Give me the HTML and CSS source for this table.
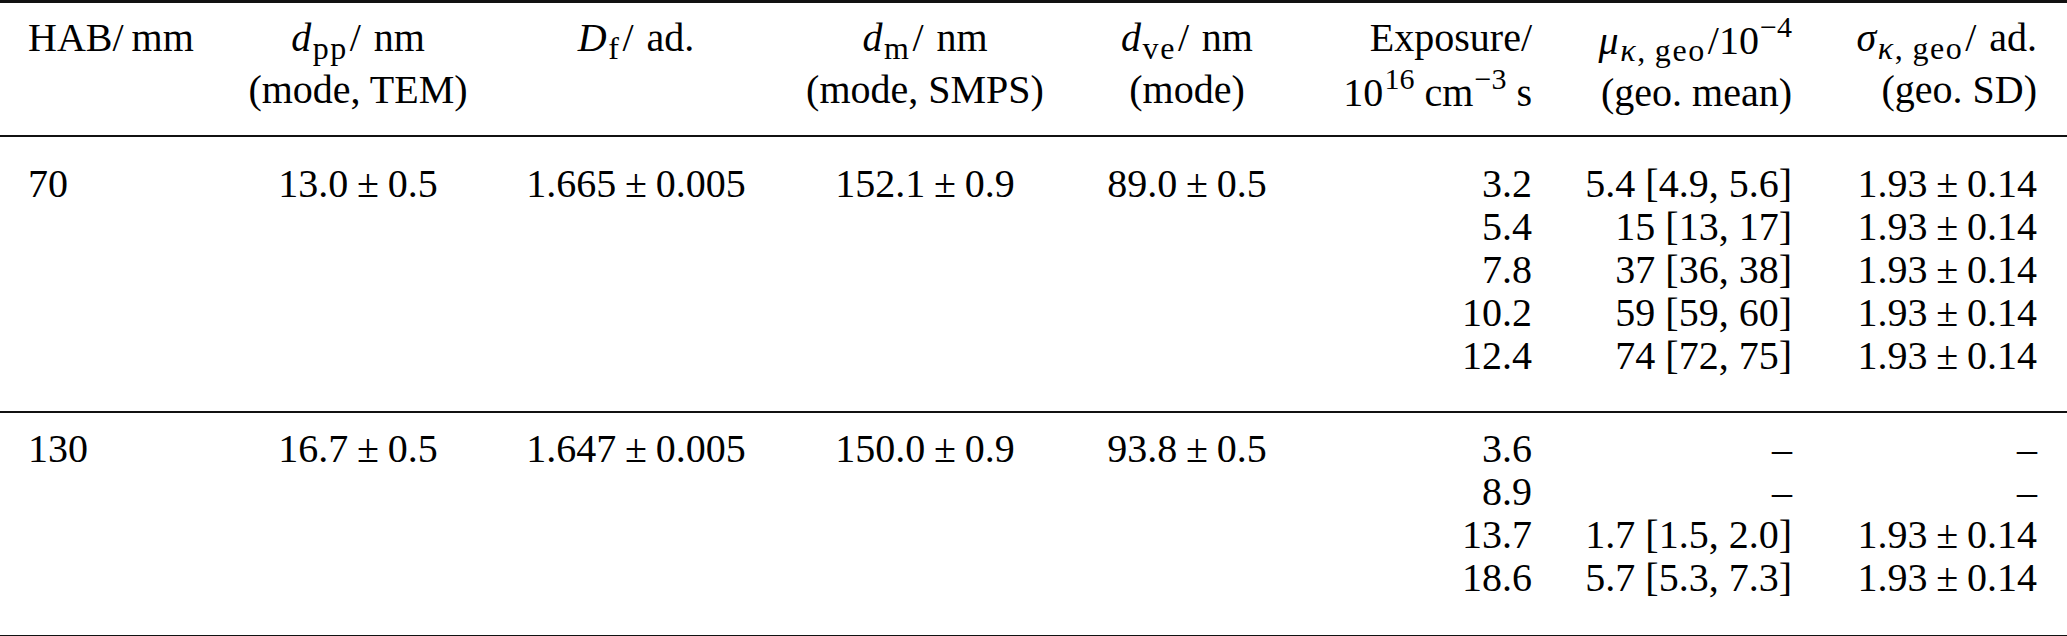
FILE: index.html
```html
<!DOCTYPE html>
<html>
<head>
    <link rel="stylesheet" href="styles.css">
</head>
<body>
    <table class="results">
        <colgroup>
            <col class="w1">
            <col class="w2">
            <col class="w3">
            <col class="w4">
            <col class="w5">
            <col class="w6">
            <col class="w7">
            <col class="w8">
        </colgroup>
        <thead>
            <tr>
                <th class="c1">HAB/&thinsp;mm</th>
                <th class="mid"><i>d</i><span class="sub">pp</span><span class="slash">/</span>nm<br>(mode, TEM)</th>
                <th class="mid"><i>D</i><span class="sub">f</span><span class="slash">/</span>ad.</th>
                <th class="mid"><i>d</i><span class="sub">m</span><span class="slash">/</span>nm<br>(mode, SMPS)</th>
                <th class="mid"><i>d</i><span class="sub">ve</span><span class="slash">/</span>nm<br>(mode)</th>
                <th class="c6">Exposure/<br>10<span class="sup">16</span> cm<span class="sup">−3</span> s</th>
                <th class="c7"><i>μ</i><span class="sub"><i>κ</i>,&thinsp;geo</span>/10<span class="sup">−4</span><br>(geo. mean)</th>
                <th class="c8"><i>σ</i><span class="sub"><i>κ</i>,&thinsp;geo</span><span class="slash">/</span>ad.<br>(geo. SD)</th>
            </tr>
        </thead>
        <tbody class="group">
            <tr class="first">
                <td class="c1">70</td>
                <td class="mid">13.0<span class="pm">±</span>0.5</td>
                <td class="mid">1.665<span class="pm">±</span>0.005</td>
                <td class="mid">152.1<span class="pm">±</span>0.9</td>
                <td class="mid">89.0<span class="pm">±</span>0.5</td>
                <td class="c6">3.2</td>
                <td class="c7">5.4 [4.9, 5.6]</td>
                <td class="c8">1.93<span class="pm">±</span>0.14</td>
            </tr>
            <tr>
                <td></td><td></td><td></td><td></td><td></td>
                <td class="c6">5.4</td>
                <td class="c7">15 [13, 17]</td>
                <td class="c8">1.93<span class="pm">±</span>0.14</td>
            </tr>
            <tr>
                <td></td><td></td><td></td><td></td><td></td>
                <td class="c6">7.8</td>
                <td class="c7">37 [36, 38]</td>
                <td class="c8">1.93<span class="pm">±</span>0.14</td>
            </tr>
            <tr>
                <td></td><td></td><td></td><td></td><td></td>
                <td class="c6">10.2</td>
                <td class="c7">59 [59, 60]</td>
                <td class="c8">1.93<span class="pm">±</span>0.14</td>
            </tr>
            <tr class="last">
                <td></td><td></td><td></td><td></td><td></td>
                <td class="c6">12.4</td>
                <td class="c7">74 [72, 75]</td>
                <td class="c8">1.93<span class="pm">±</span>0.14</td>
            </tr>
        </tbody>
        <tbody class="group end">
            <tr class="first">
                <td class="c1">130</td>
                <td class="mid">16.7<span class="pm">±</span>0.5</td>
                <td class="mid">1.647<span class="pm">±</span>0.005</td>
                <td class="mid">150.0<span class="pm">±</span>0.9</td>
                <td class="mid">93.8<span class="pm">±</span>0.5</td>
                <td class="c6">3.6</td>
                <td class="c7">–</td>
                <td class="c8">–</td>
            </tr>
            <tr>
                <td></td><td></td><td></td><td></td><td></td>
                <td class="c6">8.9</td>
                <td class="c7">–</td>
                <td class="c8">–</td>
            </tr>
            <tr>
                <td></td><td></td><td></td><td></td><td></td>
                <td class="c6">13.7</td>
                <td class="c7">1.7 [1.5, 2.0]</td>
                <td class="c8">1.93<span class="pm">±</span>0.14</td>
            </tr>
            <tr class="last">
                <td></td><td></td><td></td><td></td><td></td>
                <td class="c6">18.6</td>
                <td class="c7">5.7 [5.3, 7.3]</td>
                <td class="c8">1.93<span class="pm">±</span>0.14</td>
            </tr>
        </tbody>
    </table>
</body>
</html>
```

FILE: styles.css
```css
* {
    box-sizing: border-box;
}

body {
    margin: 0;
    padding: 0;
    background-color: #fff;
    color: #000;
    font-family: "Liberation Serif", "Times New Roman", serif;
}

.results {
    width: 2067px;
    table-layout: fixed;
    border-collapse: separate;
    border-spacing: 0;
    font-size: 40px;
}

.w1 { width: 200px; }
.w2 { width: 316px; }
.w3 { width: 240px; }
.w4 { width: 338px; }
.w5 { width: 186px; }
.w6 { width: 280px; }
.w7 { width: 260px; }
.w8 { width: 247px; }

.results th,
.results td {
    padding: 0;
    font-weight: normal;
    line-height: 43px;
    white-space: nowrap;
    vertical-align: top;
}

.results th {
    line-height: 52px;
    padding-top: 9px;
    padding-bottom: 16px;
    border-top: 3px solid #111;
    border-bottom: 2px solid #111;
}

.results .first td {
    padding-top: 25px;
}

.results .last td {
    padding-bottom: 34px;
    border-bottom: 2px solid #111;
}

.results .end .first td {
    padding-top: 14px;
}

.results .end .last td {
    padding-bottom: 36px;
    border-bottom: 3px solid #111;
}

.c1 {
    text-align: left;
    padding-left: 28px !important;
}

.mid {
    text-align: center;
}

.c6,
.c7 {
    text-align: right;
    padding-right: 28px !important;
}

.c8 {
    text-align: right;
    padding-right: 30px !important;
}

.sub {
    font-size: 0.8em;
    letter-spacing: 0.05em;
    line-height: 1;
    vertical-align: -0.24em;
    margin: 0 0.06em 0 0.05em;
}

.sup {
    font-size: 0.75em;
    line-height: 1;
    vertical-align: 0.55em;
    margin-left: 0.04em;
}

.slash {
    margin-right: 0.32em;
}

.pm {
    margin: 0 0.22em;
}
```
